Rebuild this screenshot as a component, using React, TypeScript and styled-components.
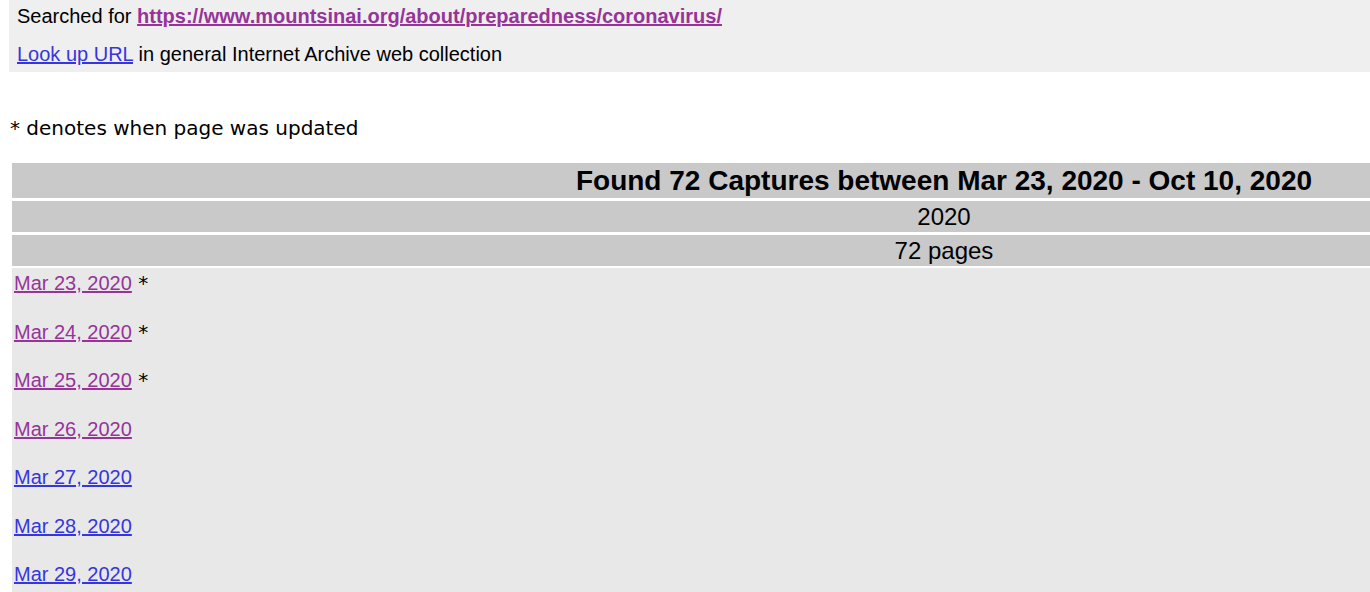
import React from "react";
import styled, { createGlobalStyle } from "styled-components";

const GlobalStyle = createGlobalStyle`
  html, body {
    margin: 0;
    padding: 0;
    overflow: hidden;
    background: #ffffff;
  }
  body {
    font-family: "DejaVu Sans", Verdana, sans-serif;
    font-size: 20px;
    color: #000;
  }
`;

const Page = styled.div`
  display: flex;
  flex-direction: column;
  padding-left: 9px;
  width: 1900px;
`;

const SearchBox = styled.div`
  display: flex;
  flex-direction: column;
  gap: 15px;
  height: 72px;
  box-sizing: border-box;
  padding: 5px 8px 0;
  background: #efefef;
  font-family: "Liberation Sans", Arial, sans-serif;
  font-size: 20px;
  line-height: 23px;
  width: 1361px;
`;

const Line = styled.div`
  white-space: nowrap;
`;

const Link = styled.a<{ $visited?: boolean; $bold?: boolean }>`
  color: ${(p) => (p.$visited ? "#96349a" : "#3636df")};
  font-weight: ${(p) => (p.$bold ? 700 : 400)};
  text-decoration: underline;
  font-family: "Liberation Sans", Arial, sans-serif;
`;

const Note = styled.div`
  margin-top: 44px;
  margin-left: 1px;
  font-family: "DejaVu Sans", Verdana, sans-serif;
  font-size: 20px;
  line-height: 24px;
`;

const Table = styled.div`
  margin-top: 23px;
  margin-left: 3px;
  width: 1864px;
  display: flex;
  flex-direction: column;
  gap: 3px;
`;

const HeadCell = styled.div<{ $h: number; $size: number; $bold?: boolean }>`
  height: ${(p) => p.$h}px;
  background: #c9c9c9;
  display: flex;
  align-items: center;
  justify-content: center;
  font-family: "Liberation Sans", Arial, sans-serif;
  font-size: ${(p) => p.$size}px;
  font-weight: ${(p) => (p.$bold ? 700 : 400)};
  white-space: nowrap;
`;

const Body = styled.div`
  background: #e8e8e8;
  padding: 4px 2px 40px;
  display: flex;
  flex-direction: column;
  gap: 25.5px;
  margin-top: -1px;
`;

const Entry = styled.div`
  line-height: 23px;
  font-size: 20px;
  white-space: nowrap;
`;

const Star = styled.span`
  font-family: "DejaVu Sans", Verdana, sans-serif;
  font-size: 20px;
`;

const captures = [
  { date: "Mar 23, 2020", visited: true, updated: true },
  { date: "Mar 24, 2020", visited: true, updated: true },
  { date: "Mar 25, 2020", visited: true, updated: true },
  { date: "Mar 26, 2020", visited: true, updated: false },
  { date: "Mar 27, 2020", visited: false, updated: false },
  { date: "Mar 28, 2020", visited: false, updated: false },
  { date: "Mar 29, 2020", visited: false, updated: false },
  { date: "Mar 30, 2020", visited: false, updated: false },
];

export default function App() {
  return (
    <>
      <GlobalStyle />
      <Page>
        <SearchBox>
          <Line>
            Searched for{" "}
            <Link $visited $bold href="#">
              https://www.mountsinai.org/about/preparedness/coronavirus/
            </Link>
          </Line>
          <Line>
            <Link href="#">Look up URL</Link> in general Internet Archive web collection
          </Line>
        </SearchBox>
        <Note>* denotes when page was updated</Note>
        <Table>
          <HeadCell $h={35} $size={28} $bold>
            Found 72 Captures between Mar 23, 2020 - Oct 10, 2020
          </HeadCell>
          <HeadCell $h={31} $size={24}>
            2020
          </HeadCell>
          <HeadCell $h={31} $size={24}>
            72 pages
          </HeadCell>
          <Body>
            {captures.map((c) => (
              <Entry key={c.date}>
                <Link $visited={c.visited} href="#">
                  {c.date}
                </Link>
                {c.updated ? <Star> *</Star> : null}
              </Entry>
            ))}
          </Body>
        </Table>
      </Page>
    </>
  );
}
